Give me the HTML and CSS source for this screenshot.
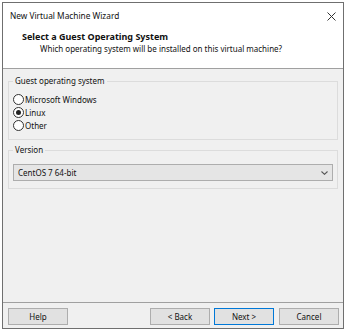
FILE: index.html
```html
<!DOCTYPE html>
<html>
<head>
<meta charset="utf-8">
<link rel="stylesheet" href="styles.css">
</head>
<body>
<div class="window">
  <div class="top">
    <div class="titlebar">
      <span class="title">New Virtual Machine Wizard</span>
      <svg class="close" width="9" height="9" viewBox="0 0 9 9"><path d="M0.5 0.5 L8.5 8.5 M8.5 0.5 L0.5 8.5" stroke="#333" stroke-width="1" fill="none"/></svg>
    </div>
    <div class="header">
      <div class="h-title">Select a Guest Operating System</div>
      <div class="h-sub">Which operating system will be installed on this virtual machine?</div>
    </div>
  </div>
  <div class="main">
    <fieldset class="group g1">
      <legend>Guest operating system</legend>
      <div class="radio"><span class="dot"></span><span>Microsoft Windows</span></div>
      <div class="radio"><span class="dot on"></span><span>Linux</span></div>
      <div class="radio"><span class="dot"></span><span>Other</span></div>
    </fieldset>
    <fieldset class="group g2">
      <legend>Version</legend>
      <div class="select">
        <span>CentOS 7 64-bit</span>
        <svg class="chev" width="7" height="4" viewBox="0 0 7 4"><path d="M0.5 0.5 L3.5 3.3 L6.5 0.5" stroke="#555" stroke-width="1.1" fill="none"/></svg>
      </div>
    </fieldset>
  </div>
  <div class="footer">
    <button class="btn">Help</button>
    <div class="spacer"></div>
    <button class="btn back">&lt; Back</button>
    <button class="btn primary">Next &gt;</button>
    <button class="btn">Cancel</button>
  </div>
</div>
</body>
</html>
```
FILE: styles.css
```css
html, body {
  margin: 0;
  padding: 0;
  background: #ffffff;
}
body {
  font-family: "Noto Sans", "Open Sans", sans-serif;
  font-size: 8px;
  color: #111;
}
.window {
  margin: 2px 0 0 2px;
  width: 340px;
  height: 325px;
  border: 1px solid #6f6f6f;
  background: #f0f0f0;
  display: flex;
  flex-direction: column;
}
.top {
  background: #ffffff;
  height: 65px;
  border-bottom: 1px solid #a0a0a0;
  box-sizing: content-box;
}
.titlebar {
  height: 25px;
  display: flex;
  align-items: center;
  padding: 0 7px 0 7px;
  justify-content: space-between;
}
.title {
  font-size: 8.3px;
}
.close {
  margin-top: 1px;
}
.header {
  padding: 3px 0 0 19px;
}
.h-title {
  font-weight: bold;
  font-size: 9px;
  line-height: 12px;
}
.h-sub {
  padding-left: 18px;
  line-height: 12px;
}
.main {
  flex: 1;
  padding: 4px 5px 0 5px;
  display: flex;
  flex-direction: column;
  gap: 2px;
}
.group {
  margin: 0;
  border: 1px solid #dcdcdc;
  padding: 0 4px 7px 4px;
  min-width: 0;
}
.group legend {
  padding: 0 2px;
  line-height: 16px;
}
.g1 {
  padding-top: 4px;
}
.radio {
  display: flex;
  align-items: center;
  height: 13px;
  gap: 1px;
}
.dot {
  width: 9px;
  height: 9px;
  border: 1px solid #333;
  border-radius: 50%;
  background: #fff;
  display: flex;
  align-items: center;
  justify-content: center;
}
.dot.on::after {
  content: "";
  width: 5px;
  height: 5px;
  border-radius: 50%;
  background: #222;
}
.g2 {
  padding-top: 6px;
  padding-bottom: 7px;
}
.select {
  height: 15px;
  border: 1px solid #adadad;
  background: #e5e5e5;
  display: flex;
  align-items: center;
  justify-content: space-between;
  padding: 0 4px 0 4px;
}
.footer {
  border-top: 1px solid #a0a0a0;
  display: flex;
  align-items: center;
  padding: 5px 4px 3px 5px;
  gap: 5px;
}
.spacer {
  flex: 1;
}
.btn {
  width: 60px;
  height: 17px;
  border: 1px solid #adadad;
  background: #e1e1e1;
  font-family: "Noto Sans", "Open Sans", sans-serif;
  font-size: 8px;
  color: #111;
  padding: 0;
  margin: 0;
}
.btn.back {
  margin-right: -1px;
}
.btn.primary {
  border-color: #0078d7;
}
```
